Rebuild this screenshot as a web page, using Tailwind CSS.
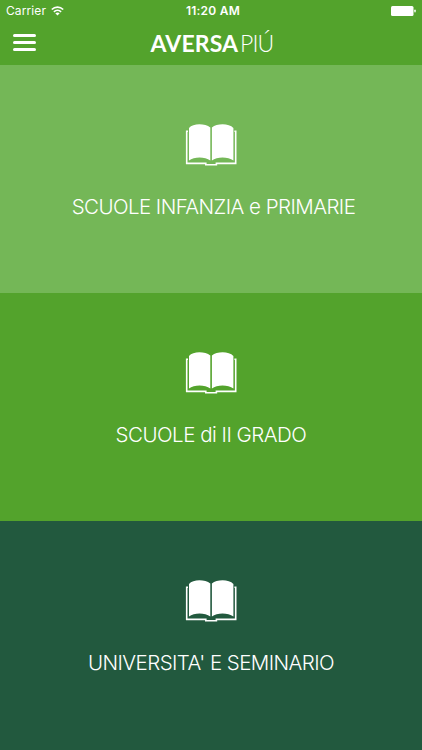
<!DOCTYPE html>
<html lang="it">
<head>
  <meta charset="UTF-8" />
  <meta name="viewport" content="width=device-width, initial-scale=1.0"/>
  <title>AversaPiú</title>
  <script src="https://cdn.jsdelivr.net/npm/@tailwindcss/browser@4"></script>
</head>
<body class="h-[750px] flex flex-col overflow-hidden bg-[#22593e] text-white font-['Inter',sans-serif]">
  <svg class="hidden">
    <!-- Open book, shared by all sections -->
    <symbol id="book" viewBox="0 0 52 42">
      <path fill="currentColor" d="M4 4C8-.8 20-.8 25.3 3.6V36.5C20 32.4 9 32.4 4 36.5Z M26.9 3.6C32-.8 44-.8 48.4 4V36.5C43 32.4 32 32.4 26.9 36.5Z"/>
      <path fill="none" stroke="currentColor" stroke-width="1.6" d="M3 7.2H1.7V39.4H20.8V40.8H31.4V39.4H50.7V7.2H49.4"/>
    </symbol>
  </svg>

  <header class="h-[65px] shrink-0 bg-[#53a32c]">
    <!-- Status bar -->
    <div class="h-[22px] grid grid-cols-3 items-center pl-[6px] pr-[6px]">
      <div class="flex items-center gap-[5px]">
        <span class="text-[12px] leading-none tracking-[0.1px]">Carrier</span>
        <svg class="w-[13px] h-[10px] -mt-px" viewBox="0 0 13 10" fill="none" stroke="currentColor" stroke-width="1.7">
          <path d="M.8 3.5C4 .4 9 .4 12.2 3.5M2.9 5.8C5 3.8 8 3.8 10.1 5.8"/>
          <path fill="currentColor" stroke="none" d="M4.3 7.3C5.6 6.2 7.4 6.2 8.7 7.3L6.5 9.6Z"/>
        </svg>
      </div>
      <span class="text-center pl-[4px] text-[12px] leading-none font-semibold tracking-[0.25px]">11:20 AM</span>
      <svg class="w-[25px] h-[10px] justify-self-end" viewBox="0 0 25 10" fill="currentColor">
        <rect width="22.5" height="10" rx="1.5"/>
        <rect x="23.3" y="3.5" width="1.4" height="3" rx=".7"/>
      </svg>
    </div>
    <!-- Nav bar -->
    <div class="h-[43px] grid grid-cols-[1fr_auto_1fr] items-center px-[13px]">
      <button class="w-[23px] flex flex-col gap-[4px] -mt-[2px]">
        <span class="h-[3px] rounded-full bg-white"></span>
        <span class="h-[3px] rounded-full bg-white"></span>
        <span class="h-[3px] rounded-full bg-white"></span>
      </button>
      <h1 class="flex items-baseline gap-[2px] pl-[2px] -mt-px font-['Lato',sans-serif] text-[23px] leading-none whitespace-nowrap">
        <span class="font-bold tracking-[0.1px]">AVERSA</span><span class="font-light tracking-[-0.9px]">PIÚ</span>
      </h1>
    </div>
  </header>

  <main class="flex flex-col font-light text-[20.5px] leading-[24px] whitespace-nowrap">
    <a class="h-[228px] flex flex-col items-center pt-[59px] bg-[#74b757]">
      <svg class="w-[52px] h-[42px]"><use href="#book"/></svg>
      <span class="mt-[29px] ml-[5px] tracking-[-0.55px]">SCUOLE INFANZIA e PRIMARIE</span>
    </a>
    <a class="h-[228px] flex flex-col items-center pt-[59px] bg-[#53a32c]">
      <svg class="w-[52px] h-[42px]"><use href="#book"/></svg>
      <span class="mt-[29px] tracking-[-0.5px]">SCUOLE di II GRADO</span>
    </a>
    <a class="h-[229px] flex flex-col items-center pt-[59px] bg-[#22593e]">
      <svg class="w-[52px] h-[42px]"><use href="#book"/></svg>
      <span class="mt-[29px] tracking-[-0.55px]">UNIVERSITA' E SEMINARIO</span>
    </a>
  </main>
</body>
</html>
